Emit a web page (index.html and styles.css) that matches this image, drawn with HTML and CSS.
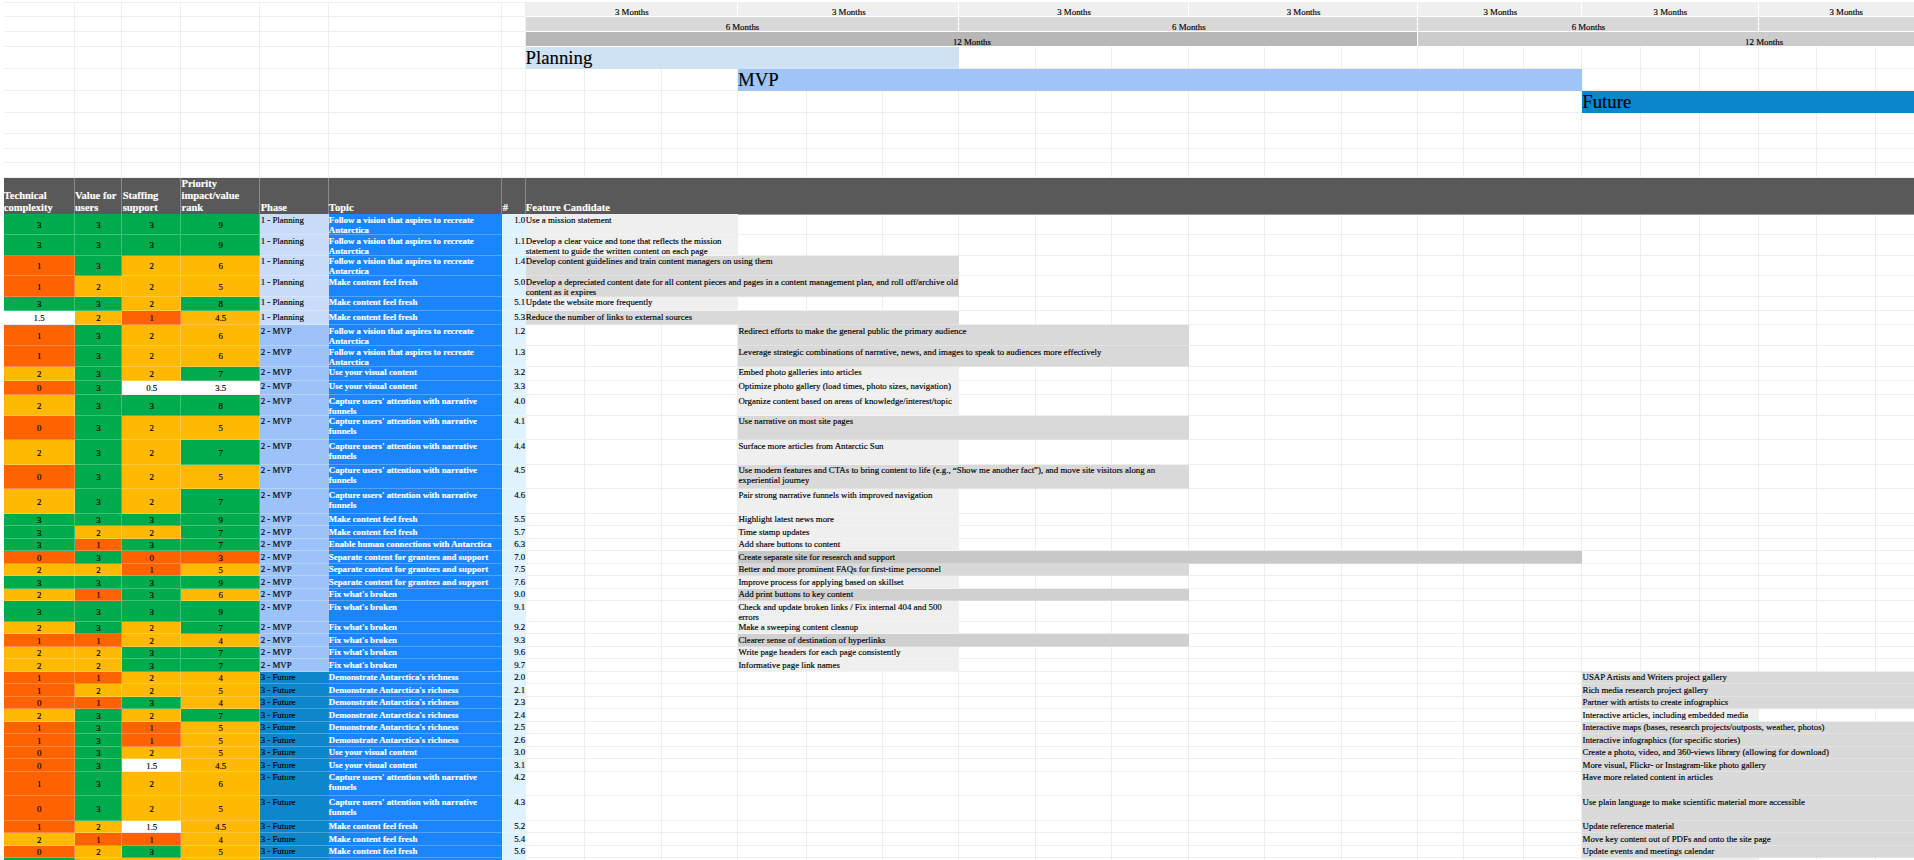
FILE: index.html
```html
<!DOCTYPE html>
<html lang="en">
<head>
    <meta charset="UTF-8">
    <title>Feature Roadmap</title>
    <link rel="stylesheet" href="styles.css">
</head>
<body>

<div class="sheet">
    <div class="gridlines">
        <i></i><i></i><i></i><i></i><i></i><i></i><i></i><i></i>
        <i></i><i></i><i></i><i></i><i></i><i></i><i></i><i></i>
        <i></i><i></i><i></i><i></i><i></i><i></i><i></i><i></i>
        <i></i><i></i><i></i><i></i><i></i><i></i><i></i>
    </div>

    <!-- timeline -->
    <div class="row h15">
        <div class="months m3 t0-3">3 Months</div>
        <div class="months m3 t3-6">3 Months</div>
        <div class="months m3 t6-9">3 Months</div>
        <div class="months m3 t9-12">3 Months</div>
        <div class="months m3 t12-15">3 Months</div>
        <div class="months m3 t15-18">3 Months</div>
        <div class="months m3 t18-21">3 Months</div>
    </div>
    <div class="row h15">
        <div class="months m6 t0-6">6 Months</div>
        <div class="months m6 t6-12">6 Months</div>
        <div class="months m6 t12-18">6 Months</div>
        <div class="months m6 t18-24"></div>
    </div>
    <div class="row h14">
        <div class="months m12 t0-12">12 Months</div>
        <div class="months m12b t12-24">12 Months</div>
    </div>
    <div class="row h22"><div class="band planning t0-6">Planning</div></div>
    <div class="row h22"><div class="band mvp t3-15">MVP</div></div>
    <div class="row h22"><div class="band future t15-24">Future</div></div>
    <div class="row h21"></div>
    <div class="row blank"></div>
    <div class="row blank"></div>
    <div class="row blank"></div>

    <!-- header -->
    <div class="row head">
        <div class="th">Technical complexity</div>
        <div class="th">Value for users</div>
        <div class="th">Staffing support</div>
        <div class="th">Priority impact/value rank</div>
        <div class="th">Phase</div>
        <div class="th">Topic</div>
        <div class="th">#</div>
        <div class="th t0-24">Feature Candidate</div>
    </div>

    <!-- 1 - Planning -->
    <div class="row h20">
        <div class="score g">3</div><div class="score g">3</div><div class="score g">3</div><div class="score g">9</div>
        <div class="phase p1">1 - Planning</div><div class="topic">Follow a vision that aspires to recreate Antarctica</div><div class="num">1.0</div>
        <div class="feature light t0-3">Use a mission statement</div>
    </div>
    <div class="row h20">
        <div class="score g">3</div><div class="score g">3</div><div class="score g">3</div><div class="score g">9</div>
        <div class="phase p1">1 - Planning</div><div class="topic">Follow a vision that aspires to recreate Antarctica</div><div class="num">1.1</div>
        <div class="feature light t0-3">Develop a clear voice and tone that reflects the mission statement to guide the written content on each page</div>
    </div>
    <div class="row h20">
        <div class="score o">1</div><div class="score g">3</div><div class="score y">2</div><div class="score y">6</div>
        <div class="phase p1">1 - Planning</div><div class="topic">Follow a vision that aspires to recreate Antarctica</div><div class="num">1.4</div>
        <div class="feature mid t0-6">Develop content guidelines and train content managers on using them</div>
    </div>
    <div class="row h20">
        <div class="score o">1</div><div class="score y">2</div><div class="score y">2</div><div class="score y">5</div>
        <div class="phase p1">1 - Planning</div><div class="topic">Make content feel fresh</div><div class="num">5.0</div>
        <div class="feature mid t0-6">Develop a depreciated content date for all content pieces and pages in a content management plan, and roll off/archive old content as it expires</div>
    </div>
    <div class="row h14b">
        <div class="score g">3</div><div class="score g">3</div><div class="score y">2</div><div class="score g">8</div>
        <div class="phase p1">1 - Planning</div><div class="topic">Make content feel fresh</div><div class="num">5.1</div>
        <div class="feature light t0-3">Update the website more frequently</div>
    </div>
    <div class="row h14b">
        <div class="score w">1.5</div><div class="score y">2</div><div class="score o">1</div><div class="score y">4.5</div>
        <div class="phase p1">1 - Planning</div><div class="topic">Make content feel fresh</div><div class="num">5.3</div>
        <div class="feature mid t0-6">Reduce the number of links to external sources</div>
    </div>

    <!-- 2 - MVP -->
    <div class="row h20">
        <div class="score o">1</div><div class="score g">3</div><div class="score y">2</div><div class="score y">6</div>
        <div class="phase p2">2 - MVP</div><div class="topic">Follow a vision that aspires to recreate Antarctica</div><div class="num">1.2</div>
        <div class="feature mid t3-9">Redirect efforts to make the general public the primary audience</div>
    </div>
    <div class="row h20">
        <div class="score o">1</div><div class="score g">3</div><div class="score y">2</div><div class="score y">6</div>
        <div class="phase p2">2 - MVP</div><div class="topic">Follow a vision that aspires to recreate Antarctica</div><div class="num">1.3</div>
        <div class="feature mid t3-9">Leverage strategic combinations of narrative, news, and images to speak to audiences more effectively</div>
    </div>
    <div class="row h14b">
        <div class="score y">2</div><div class="score g">3</div><div class="score y">2</div><div class="score g">7</div>
        <div class="phase p2">2 - MVP</div><div class="topic">Use your visual content</div><div class="num">3.2</div>
        <div class="feature light t3-6">Embed photo galleries into articles</div>
    </div>
    <div class="row h14b">
        <div class="score o">0</div><div class="score g">3</div><div class="score w">0.5</div><div class="score w">3.5</div>
        <div class="phase p2">2 - MVP</div><div class="topic">Use your visual content</div><div class="num">3.3</div>
        <div class="feature light t3-6">Optimize photo gallery (load times, photo sizes, navigation)</div>
    </div>
    <div class="row h20">
        <div class="score y">2</div><div class="score g">3</div><div class="score g">3</div><div class="score g">8</div>
        <div class="phase p2">2 - MVP</div><div class="topic">Capture users' attention with narrative funnels</div><div class="num">4.0</div>
        <div class="feature light t3-6">Organize content based on areas of knowledge/interest/topic</div>
    </div>
    <div class="row h24">
        <div class="score o">0</div><div class="score g">3</div><div class="score y">2</div><div class="score y">5</div>
        <div class="phase p2">2 - MVP</div><div class="topic">Capture users' attention with narrative funnels</div><div class="num">4.1</div>
        <div class="feature mid t3-9">Use narrative on most site pages</div>
    </div>
    <div class="row h24">
        <div class="score y">2</div><div class="score g">3</div><div class="score y">2</div><div class="score g">7</div>
        <div class="phase p2">2 - MVP</div><div class="topic">Capture users' attention with narrative funnels</div><div class="num">4.4</div>
        <div class="feature light t3-6">Surface more articles from Antarctic Sun</div>
    </div>
    <div class="row h24">
        <div class="score o">0</div><div class="score g">3</div><div class="score y">2</div><div class="score y">5</div>
        <div class="phase p2">2 - MVP</div><div class="topic">Capture users' attention with narrative funnels</div><div class="num">4.5</div>
        <div class="feature mid t3-9">Use modern features and CTAs to bring content to life (e.g., “Show me another fact”), and move site visitors along an experiential journey</div>
    </div>
    <div class="row h24">
        <div class="score y">2</div><div class="score g">3</div><div class="score y">2</div><div class="score g">7</div>
        <div class="phase p2">2 - MVP</div><div class="topic">Capture users' attention with narrative funnels</div><div class="num">4.6</div>
        <div class="feature light t3-6">Pair strong narrative funnels with improved navigation</div>
    </div>
    <div class="row h12">
        <div class="score g">3</div><div class="score g">3</div><div class="score g">3</div><div class="score g">9</div>
        <div class="phase p2">2 - MVP</div><div class="topic">Make content feel fresh</div><div class="num">5.5</div>
        <div class="feature light t3-6">Highlight latest news more</div>
    </div>
    <div class="row h12">
        <div class="score g">3</div><div class="score y">2</div><div class="score y">2</div><div class="score g">7</div>
        <div class="phase p2">2 - MVP</div><div class="topic">Make content feel fresh</div><div class="num">5.7</div>
        <div class="feature light t3-6">Time stamp updates</div>
    </div>
    <div class="row h12">
        <div class="score g">3</div><div class="score o">1</div><div class="score g">3</div><div class="score g">7</div>
        <div class="phase p2">2 - MVP</div><div class="topic">Enable human connections with Antarctica</div><div class="num">6.3</div>
        <div class="feature light t3-6">Add share buttons to content</div>
    </div>
    <div class="row h12">
        <div class="score o">0</div><div class="score g">3</div><div class="score o">0</div><div class="score o">3</div>
        <div class="phase p2">2 - MVP</div><div class="topic">Separate content for grantees and support</div><div class="num">7.0</div>
        <div class="feature darker t3-15">Create separate site for research and support</div>
    </div>
    <div class="row h12">
        <div class="score y">2</div><div class="score y">2</div><div class="score o">1</div><div class="score y">5</div>
        <div class="phase p2">2 - MVP</div><div class="topic">Separate content for grantees and support</div><div class="num">7.5</div>
        <div class="feature mid t3-9">Better and more prominent FAQs for first-time personnel</div>
    </div>
    <div class="row h12">
        <div class="score g">3</div><div class="score g">3</div><div class="score g">3</div><div class="score g">9</div>
        <div class="phase p2">2 - MVP</div><div class="topic">Separate content for grantees and support</div><div class="num">7.6</div>
        <div class="feature light t3-6">Improve process for applying based on skillset</div>
    </div>
    <div class="row h12">
        <div class="score y">2</div><div class="score o">1</div><div class="score g">3</div><div class="score y">6</div>
        <div class="phase p2">2 - MVP</div><div class="topic">Fix what's broken</div><div class="num">9.0</div>
        <div class="feature dark t3-9">Add print buttons to key content</div>
    </div>
    <div class="row h20">
        <div class="score g">3</div><div class="score g">3</div><div class="score g">3</div><div class="score g">9</div>
        <div class="phase p2">2 - MVP</div><div class="topic">Fix what's broken</div><div class="num">9.1</div>
        <div class="feature light t3-6">Check and update broken links / Fix internal 404 and 500 errors</div>
    </div>
    <div class="row h12">
        <div class="score y">2</div><div class="score g">3</div><div class="score y">2</div><div class="score g">7</div>
        <div class="phase p2">2 - MVP</div><div class="topic">Fix what's broken</div><div class="num">9.2</div>
        <div class="feature light t3-6">Make a sweeping content cleanup</div>
    </div>
    <div class="row h12">
        <div class="score o">1</div><div class="score o">1</div><div class="score y">2</div><div class="score y">4</div>
        <div class="phase p2">2 - MVP</div><div class="topic">Fix what's broken</div><div class="num">9.3</div>
        <div class="feature dark t3-9">Clearer sense of destination of hyperlinks</div>
    </div>
    <div class="row h12">
        <div class="score y">2</div><div class="score y">2</div><div class="score g">3</div><div class="score g">7</div>
        <div class="phase p2">2 - MVP</div><div class="topic">Fix what's broken</div><div class="num">9.6</div>
        <div class="feature light t3-6">Write page headers for each page consistently</div>
    </div>
    <div class="row h12">
        <div class="score y">2</div><div class="score y">2</div><div class="score g">3</div><div class="score g">7</div>
        <div class="phase p2">2 - MVP</div><div class="topic">Fix what's broken</div><div class="num">9.7</div>
        <div class="feature light t3-6">Informative page link names</div>
    </div>

    <!-- 3 - Future -->
    <div class="row h12">
        <div class="score o">1</div><div class="score o">1</div><div class="score y">2</div><div class="score y">4</div>
        <div class="phase p3">3 - Future</div><div class="topic">Demonstrate Antarctica's richness</div><div class="num">2.0</div>
        <div class="feature mid t15-24">USAP Artists and Writers project gallery</div>
    </div>
    <div class="row h12">
        <div class="score o">1</div><div class="score y">2</div><div class="score y">2</div><div class="score y">5</div>
        <div class="phase p3">3 - Future</div><div class="topic">Demonstrate Antarctica's richness</div><div class="num">2.1</div>
        <div class="feature mid t15-24">Rich media research project gallery</div>
    </div>
    <div class="row h12">
        <div class="score o">0</div><div class="score o">1</div><div class="score g">3</div><div class="score y">4</div>
        <div class="phase p3">3 - Future</div><div class="topic">Demonstrate Antarctica's richness</div><div class="num">2.3</div>
        <div class="feature mid t15-24">Partner with artists to create infographics</div>
    </div>
    <div class="row h12">
        <div class="score y">2</div><div class="score g">3</div><div class="score y">2</div><div class="score g">7</div>
        <div class="phase p3">3 - Future</div><div class="topic">Demonstrate Antarctica's richness</div><div class="num">2.4</div>
        <div class="feature light t15-18">Interactive articles, including embedded media</div>
    </div>
    <div class="row h12">
        <div class="score o">1</div><div class="score g">3</div><div class="score o">1</div><div class="score y">5</div>
        <div class="phase p3">3 - Future</div><div class="topic">Demonstrate Antarctica's richness</div><div class="num">2.5</div>
        <div class="feature mid t15-24">Interactive maps (bases, research projects/outposts, weather, photos)</div>
    </div>
    <div class="row h12">
        <div class="score o">1</div><div class="score g">3</div><div class="score o">1</div><div class="score y">5</div>
        <div class="phase p3">3 - Future</div><div class="topic">Demonstrate Antarctica's richness</div><div class="num">2.6</div>
        <div class="feature mid t15-24">Interactive infographics (for specific stories)</div>
    </div>
    <div class="row h12">
        <div class="score o">0</div><div class="score g">3</div><div class="score y">2</div><div class="score y">5</div>
        <div class="phase p3">3 - Future</div><div class="topic">Use your visual content</div><div class="num">3.0</div>
        <div class="feature mid t15-24">Create a photo, video, and 360-views library (allowing for download)</div>
    </div>
    <div class="row h12">
        <div class="score o">0</div><div class="score g">3</div><div class="score w">1.5</div><div class="score y">4.5</div>
        <div class="phase p3">3 - Future</div><div class="topic">Use your visual content</div><div class="num">3.1</div>
        <div class="feature mid t15-24">More visual, Flickr- or Instagram-like photo gallery</div>
    </div>
    <div class="row h24">
        <div class="score o">1</div><div class="score g">3</div><div class="score y">2</div><div class="score y">6</div>
        <div class="phase p3">3 - Future</div><div class="topic">Capture users' attention with narrative funnels</div><div class="num">4.2</div>
        <div class="feature mid t15-24">Have more related content in articles</div>
    </div>
    <div class="row h24">
        <div class="score o">0</div><div class="score g">3</div><div class="score y">2</div><div class="score y">5</div>
        <div class="phase p3">3 - Future</div><div class="topic">Capture users' attention with narrative funnels</div><div class="num">4.3</div>
        <div class="feature mid t15-24">Use plain language to make scientific material more accessible</div>
    </div>
    <div class="row h12">
        <div class="score o">1</div><div class="score y">2</div><div class="score w">1.5</div><div class="score y">4.5</div>
        <div class="phase p3">3 - Future</div><div class="topic">Make content feel fresh</div><div class="num">5.2</div>
        <div class="feature mid t15-24">Update reference material</div>
    </div>
    <div class="row h12">
        <div class="score y">2</div><div class="score o">1</div><div class="score o">1</div><div class="score y">4</div>
        <div class="phase p3">3 - Future</div><div class="topic">Make content feel fresh</div><div class="num">5.4</div>
        <div class="feature mid t15-24">Move key content out of PDFs and onto the site page</div>
    </div>
    <div class="row h12">
        <div class="score o">0</div><div class="score y">2</div><div class="score g">3</div><div class="score y">5</div>
        <div class="phase p3">3 - Future</div><div class="topic">Make content feel fresh</div><div class="num">5.6</div>
        <div class="feature mid t15-24">Update events and meetings calendar</div>
    </div>
    <div class="row h12">
        <div class="score g"></div><div class="score y"></div><div class="score y"></div><div class="score y"></div>
        <div class="phase p3"></div><div class="topic"></div><div class="num"></div>
        <div class="feature light t15-18"></div>
    </div>
</div>

</body>
</html>
```

FILE: styles.css
```css
html, body {
    margin: 0;
    height: 860px;
    overflow: hidden;
    background-color: #fff;
}
body {
    padding: 2.3px 0 0 3.5px;
    box-sizing: border-box;
    font-family: "Liberation Serif", "Times New Roman", serif;
    font-size: 8.85px;
    line-height: 10px;
    color: #000;
    -webkit-text-stroke: 0.15px;
}
.sheet {
    --cols: 71.2px 47.7px 58.8px 79.2px 68.2px 173.8px 23.2px
            59.7px 76.6px 76.3px 69.3px 75.8px 76.2px 76.7px 75.7px 77px 76.6px 76.9px 76.1px
            46px 59.2px 58.7px 58.3px 59.2px 58.9px 58.3px 58.8px 58.2px 58.7px 58.7px 58.7px;
    position: relative;
    z-index: 0;
    overflow: hidden;
    width: 1910.5px;
    height: 857.7px;
    box-shadow: inset 0 1px 0 #eee;
}
.gridlines {
    position: absolute;
    z-index: -1;
    top: 0;
    left: 0;
    height: 100%;
    display: grid;
    grid-template-columns: var(--cols);
}
.gridlines i {
    border-right: 1px solid #eee;
}
.row {
    display: grid;
    grid-template-columns: var(--cols);
    box-shadow: inset 0 -1px 0 #eee;
}

/* row heights */
.h15 { height: 15px; }
.h14 { height: 14.5px; }
.h14b { height: 14.3px; }
.h22 { height: 22px; }
.h21 { height: 21.5px; }
.blank { height: 14.6px; }
.head { height: 36.4px; }
.h20 { height: 20.6px; }
.h24 { height: 24.5px; }
.h12 { height: 12.5px; }

/* timeline columns */
.t0-3 { grid-column: 8 / 11; }
.t0-6 { grid-column: 8 / 14; }
.t0-12 { grid-column: 8 / 20; }
.t0-24 { grid-column: 8 / 32; }
.t3-6 { grid-column: 11 / 14; }
.t3-9 { grid-column: 11 / 17; }
.t3-15 { grid-column: 11 / 23; }
.t6-9 { grid-column: 14 / 17; }
.t6-12 { grid-column: 14 / 20; }
.t9-12 { grid-column: 17 / 20; }
.t12-15 { grid-column: 20 / 23; }
.t12-18 { grid-column: 20 / 26; }
.t12-24 { grid-column: 20 / 32; }
.t15-18 { grid-column: 23 / 26; }
.t15-24 { grid-column: 23 / 32; }
.t18-21 { grid-column: 26 / 29; }
.t18-24 { grid-column: 26 / 32; }

.months {
    display: flex;
    align-items: flex-end;
    justify-content: center;
    box-shadow: inset -1px -1px 0 #fff;
}
.m3 { background-color: #efefef; }
.m6 { background-color: #d9d9d9; }
.m12 { background-color: #b7b7b7; }
.m12b { background-color: #ccc; }

.band {
    font-size: 18.8px;
    line-height: 22px;
}
.planning { background-color: #cfe2f3; }
.mvp { background-color: #9fc5f8; }
.future { background-color: #0b85cc; }

.th {
    display: flex;
    align-items: flex-end;
    padding: 0 0.3px 1px;
    background-color: #595959;
    color: #fff;
    font-size: 10.5px;
    line-height: 12px;
    font-weight: bold;
    box-shadow: inset -1px 0 0 #8a8a8a, inset 0 -1px 0 #9a9a9a;
}
.th.t0-24 {
    box-shadow: inset 0 -1px 0 #9a9a9a;
}

.score {
    display: flex;
    align-items: center;
    justify-content: center;
    box-shadow: inset -1px -1px 0 rgba(255, 255, 255, 0.25);
}
.g { background-color: #00ab4e; }
.y { background-color: #ffb900; }
.o { background-color: #ff6200; }
.w { background-color: #fff; box-shadow: inset 0 -1px 0 #eee; }

.phase, .topic, .num, .feature {
    padding: 0.5px 0.3px 0;
    box-shadow: inset 0 -1px 0 rgba(255, 255, 255, 0.25);
}
.p1 { background-color: #c9dcfa; }
.p2 { background-color: #9cc3f9; }
.p3 { background-color: #0d86cb; }
.topic {
    background-color: #1b85ff;
    color: #fff;
    font-weight: bold;
}
.num {
    background-color: #dff3ff;
    text-align: right;
}
.light { background-color: #efefef; }
.mid { background-color: #d9d9d9; }
.dark { background-color: #d0d0d0; }
.darker { background-color: #c8c8c8; }
```
